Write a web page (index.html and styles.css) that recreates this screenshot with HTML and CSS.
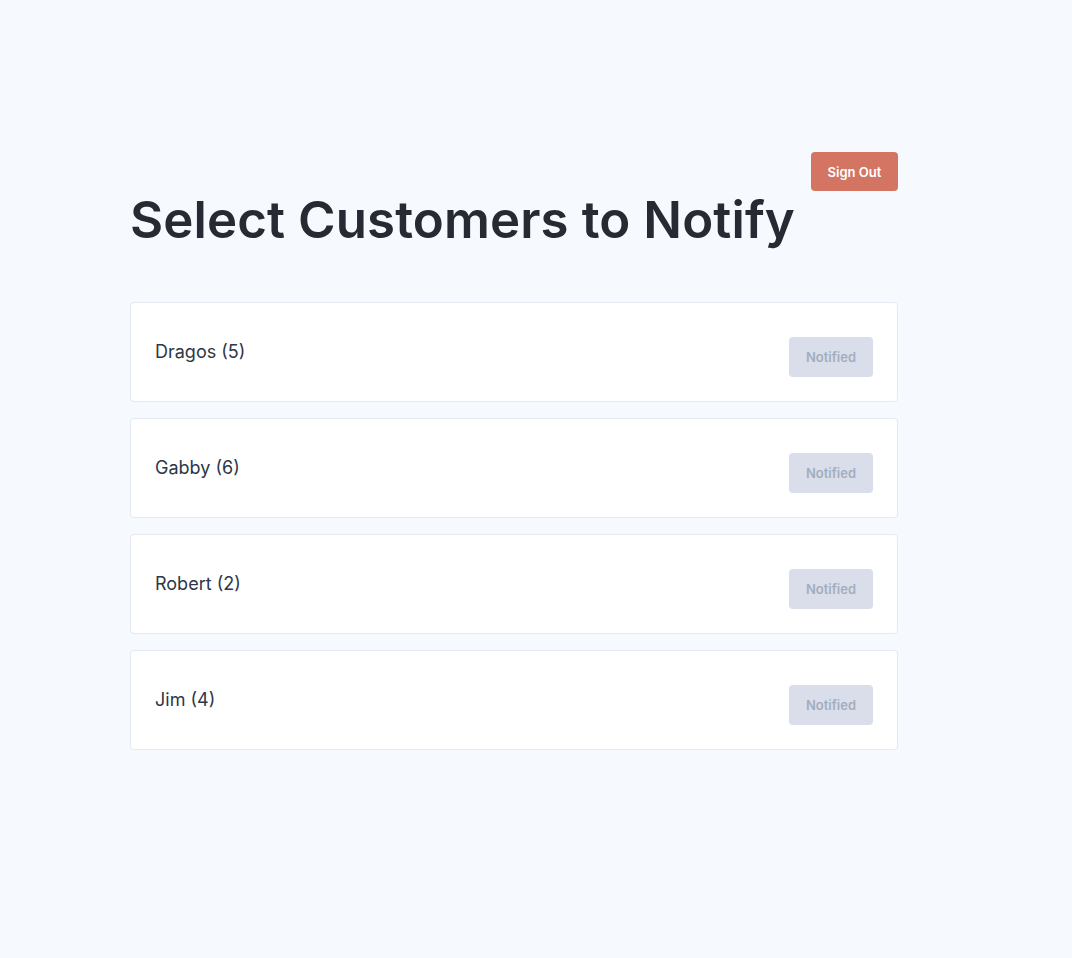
FILE: index.html
```html
<!DOCTYPE html>
<html>
<head>
<meta charset="utf-8">
<link rel="stylesheet" href="styles.css">
</head>
<body>
<main class="page">
  <div class="topbar">
    <button class="btn-signout">Sign Out</button>
  </div>
  <h1 class="title">Select Customers to Notify</h1>
  <ul class="list">
    <li class="card"><span class="name">Dragos (5)</span><button class="btn-notified">Notified</button></li>
    <li class="card"><span class="name">Gabby (6)</span><button class="btn-notified">Notified</button></li>
    <li class="card"><span class="name">Robert (2)</span><button class="btn-notified">Notified</button></li>
    <li class="card"><span class="name">Jim (4)</span><button class="btn-notified">Notified</button></li>
  </ul>
</main>
</body>
</html>
```
FILE: styles.css
```css
html, body {
  margin: 0;
  padding: 0;
  background: #f6f9fe;
  font-family: Inter, "Open Sans", sans-serif;
}
.page {
  width: 768px;
  padding: 152px 0 0 130px;
}
.topbar {
  display: flex;
  justify-content: flex-end;
}
.btn-signout {
  height: 39px;
  width: 87px;
  border: none;
  border-radius: 4px;
  background: #d47563;
  color: #fff;
  font-family: inherit;
  font-size: 13px;
  font-weight: 600;
  padding: 0;
}
.title {
  margin: 0;
  font-size: 51px;
  font-weight: 600;
  letter-spacing: 0.1px;
  color: #272a33;
  line-height: 62px;
  margin-top: -2px;
}
.list {
  list-style: none;
  margin: 51px 0 0;
  padding: 0;
  display: flex;
  flex-direction: column;
  gap: 16px;
}
.card {
  height: 100px;
  box-sizing: border-box;
  background: #fff;
  border: 1px solid #e4e9f4;
  border-radius: 4px;
  display: flex;
  align-items: center;
  justify-content: space-between;
  padding: 0 24px;
}
.name {
  font-size: 18px;
  color: #2d3748;
  margin-top: -2px;
}
.btn-notified {
  width: 84px;
  height: 40px;
  border: none;
  border-radius: 4px;
  background: #d9deea;
  color: #a3adbf;
  font-family: inherit;
  font-size: 13px;
  font-weight: 600;
  padding: 0;
  margin-top: 9px;
}
```
